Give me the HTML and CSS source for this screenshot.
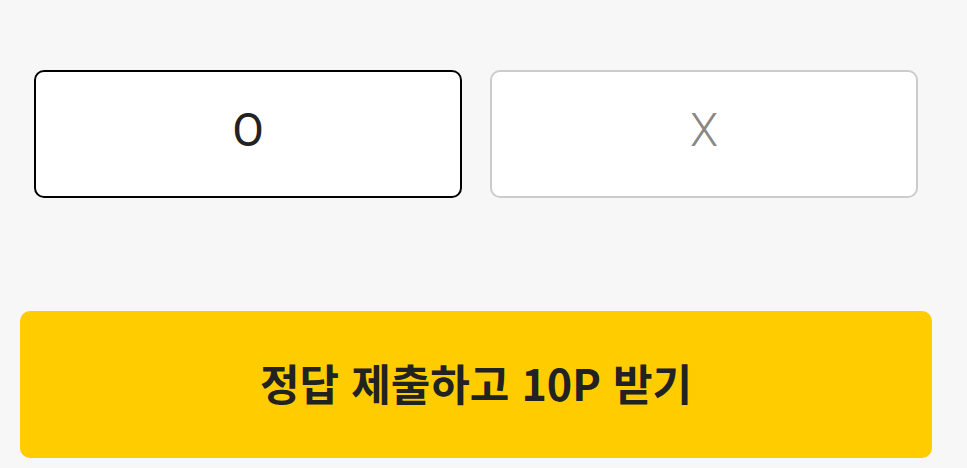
FILE: index.html
```html
<!DOCTYPE html>
<html lang="ko">
<head>
    <meta charset="UTF-8">
    <meta name="viewport" content="width=device-width, initial-scale=1.0">
    <title>OX 퀴즈</title>
    <link rel="stylesheet" href="styles.css">
</head>
<body>
    <div class="quiz">
        <div class="options">
            <button class="option selected">O</button>
            <button class="option">X</button>
        </div>
        <button class="submit">정답 제출하고 10P 받기</button>
    </div>
</body>
</html>
```

FILE: styles.css
```css
body {
    margin: 0;
    background-color: #f7f7f7;
    font-family: "Noto Sans CJK KR", "Noto Sans", sans-serif;
}

.quiz {
    display: flex;
    flex-direction: column;
    padding: 70px 0 0 20px;
}

.options {
    display: flex;
    gap: 28px;
    padding-left: 14px;
}

.option {
    width: 428px;
    height: 128px;
    box-sizing: border-box;
    background-color: #fff;
    border: 2px solid #ccc;
    border-radius: 10px;
    font-family: Roboto, "Noto Sans CJK KR", sans-serif;
    font-size: 46px;
    font-weight: 300;
    color: #888;
    padding: 0 0 8px;
    cursor: pointer;
}

.option.selected {
    border-color: #000;
    color: #222;
    font-weight: 400;
}

.submit {
    margin-top: 113px;
    width: 912px;
    height: 147px;
    background-color: #ffcc00;
    border: none;
    border-radius: 10px;
    font-family: inherit;
    font-size: 43px;
    font-weight: 600;
    color: #222;
    padding: 0 0 6px;
    cursor: pointer;
}
```
